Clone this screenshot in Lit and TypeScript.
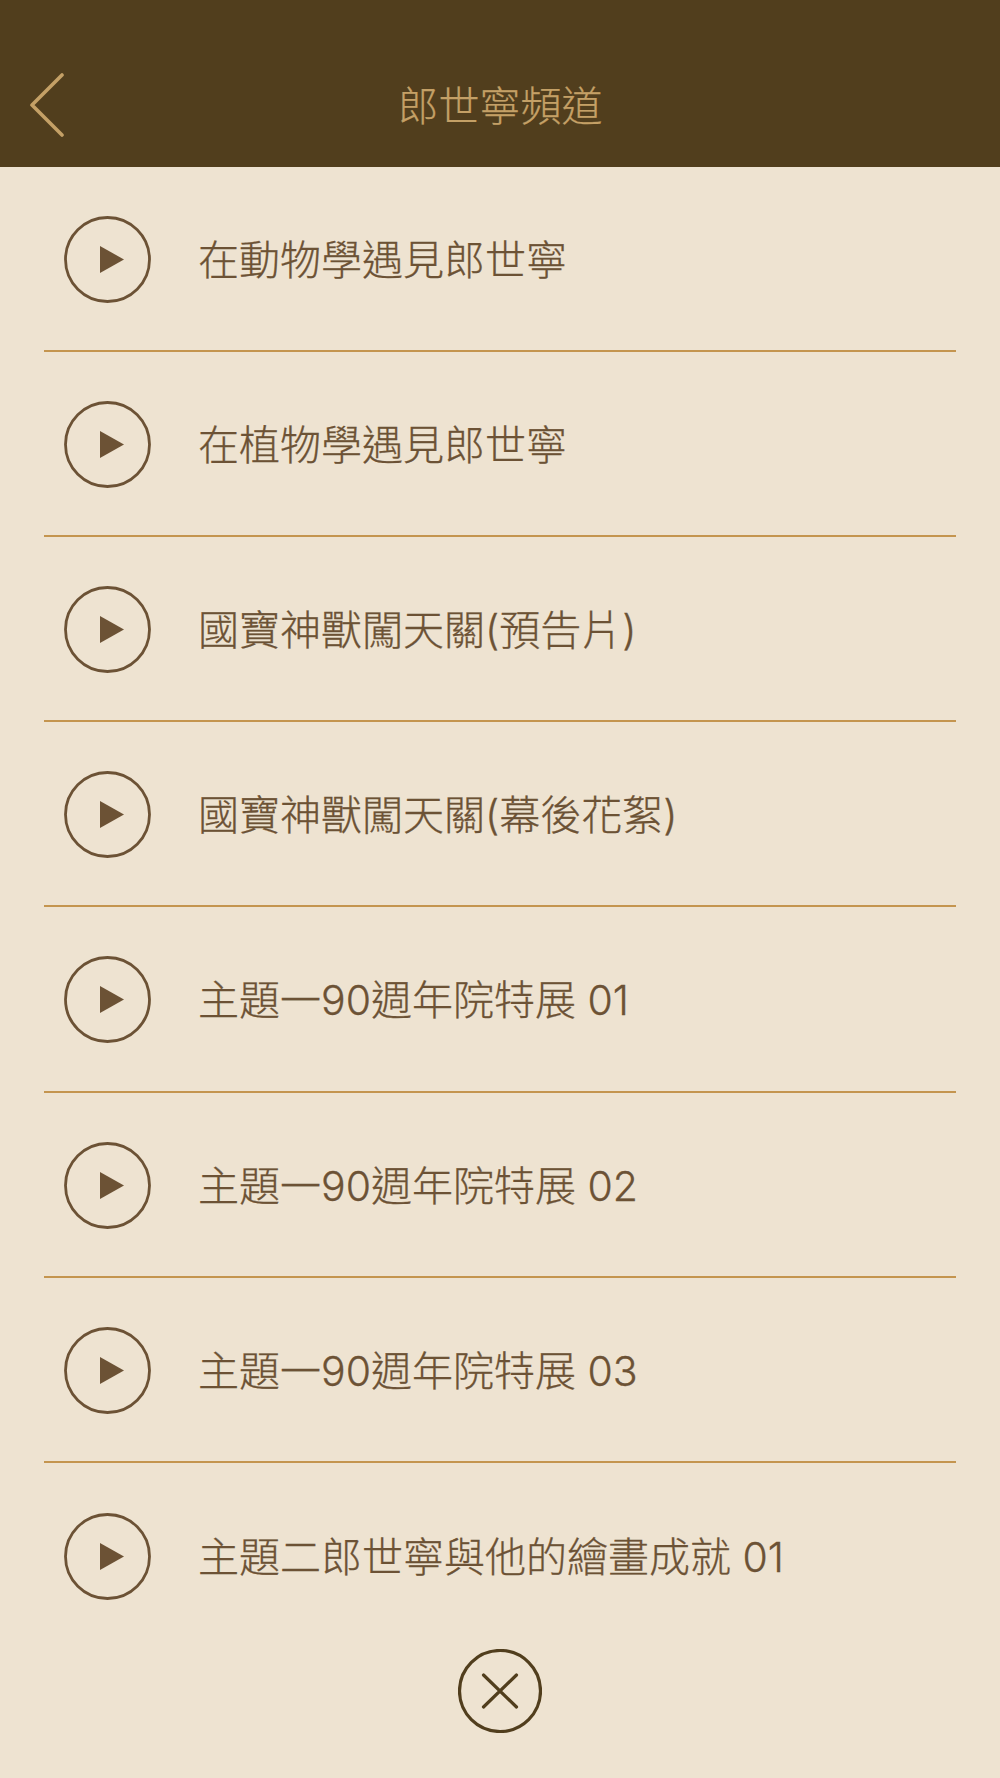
import { LitElement, html, css } from "lit";
import { customElement } from "lit/decorators.js";

const ITEMS = [
  "在動物學遇見郎世寧",
  "在植物學遇見郎世寧",
  "國寶神獸闖天關(預告片)",
  "國寶神獸闖天關(幕後花絮)",
  "主題一90週年院特展 01",
  "主題一90週年院特展 02",
  "主題一90週年院特展 03",
  "主題二郎世寧與他的繪畫成就 01",
];

@customElement("app-root")
export class AppRoot extends LitElement {
  static styles = css`
    :host {
      display: flex;
      flex-direction: column;
      width: 1000px;
      height: 1778px;
      overflow: hidden;
      background: #eee3d1;
      font-family: "Inter", "Noto Sans CJK TC", "Noto Sans", sans-serif;
      font-weight: 300;
    }
    .header {
      flex: 0 0 166.6px;
      box-sizing: border-box;
      display: grid;
      grid-template-columns: 1fr auto 1fr;
      align-items: center;
      padding: 43px 30px 0;
      background: #513e1d;
    }
    .back {
      display: block;
      width: 34px;
      height: 64px;
    }
    .title {
      font-size: 41px;
      line-height: 56px;
      padding-top: 2px;
      color: #c4a066;
      -webkit-text-stroke: 0.25px #c4a066;
    }
    .list {
      flex: 1;
      min-height: 0;
      overflow: hidden;
    }
    .row {
      box-sizing: border-box;
      height: 185.2px;
      margin: 0 44px;
      padding: 0 0 0 20px;
      display: flex;
      align-items: center;
      gap: 47px;
      border-bottom: 2px solid #c4954f;
    }
    .row:last-child {
      border-bottom: none;
    }
    .play {
      flex: none;
      display: block;
      width: 87px;
      height: 87px;
      margin-top: 2px;
    }
    .label {
      font-size: 41px;
      line-height: 56px;
      padding-top: 3px;
      color: #6c5235;
      -webkit-text-stroke: 0.3px #6c5235;
      white-space: nowrap;
    }
    .footer {
      flex: 0 0 166px;
      box-sizing: border-box;
      display: flex;
      justify-content: center;
      padding-top: 37px;
    }
    .close {
      display: block;
      width: 84px;
      height: 84px;
    }
  `;

  render() {
    return html`
      <div class="header">
        <svg class="back" viewBox="0 0 34 64" fill="none">
          <path d="M32 2 L2 32 L32 62" stroke="#c4a066" stroke-width="3.6" stroke-linecap="round" stroke-linejoin="round" />
        </svg>
        <div class="title">郎世寧頻道</div>
        <div></div>
      </div>
      <div class="list">
        ${ITEMS.map(
          (t) => html`
            <div class="row">
              <svg class="play" viewBox="0 0 87 87" fill="none">
                <circle cx="43.5" cy="43.5" r="42" stroke="#6c5235" stroke-width="2.8" />
                <path d="M36 30 L60 43.5 L36 57 Z" fill="#6c5235" />
              </svg>
              <div class="label">${t}</div>
            </div>
          `
        )}
      </div>
      <div class="footer">
        <svg class="close" viewBox="0 0 84 84" fill="none">
          <circle cx="42" cy="42" r="40.5" stroke="#513e1d" stroke-width="3.2" />
          <path d="M25.5 26 L58.5 58 M58.5 26 L25.5 58" stroke="#513e1d" stroke-width="3.2" stroke-linecap="round" />
        </svg>
      </div>
    `;
  }
}
